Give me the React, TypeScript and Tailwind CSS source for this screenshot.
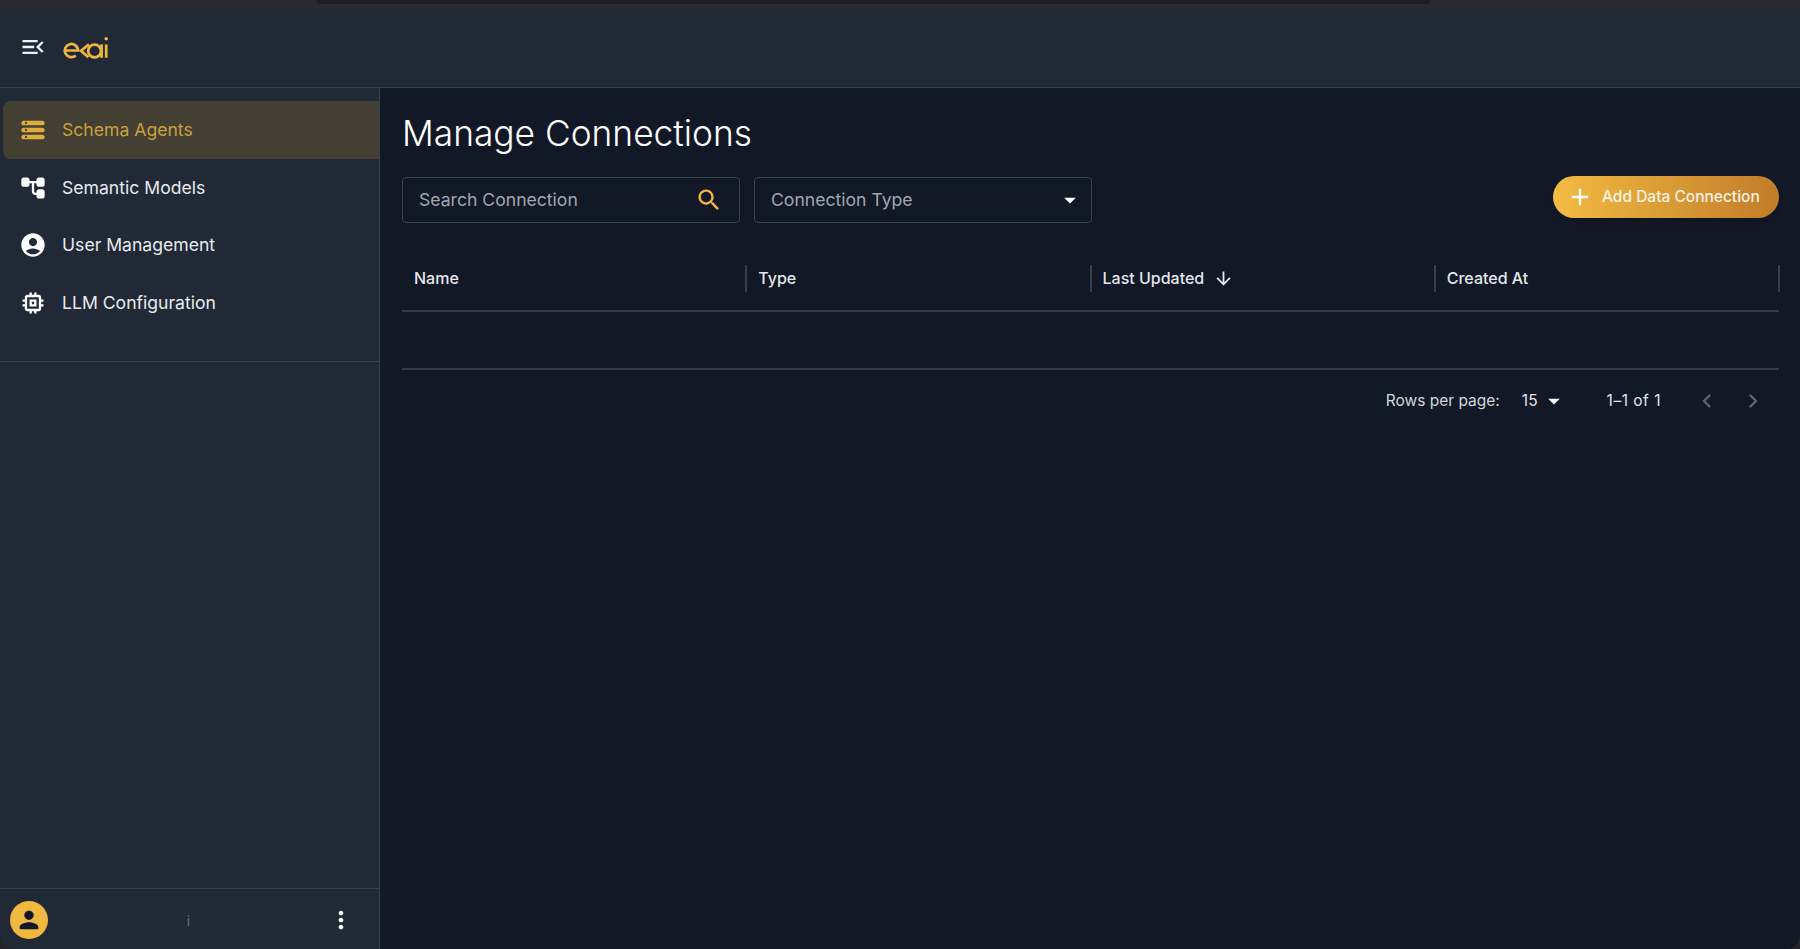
const Icon = ({ d, className }: { d: string; className: string }) => (
  <svg viewBox="0 0 24 24" fill="currentColor" className={className}>
    <path d={d} />
  </svg>
);

const paths = {
  menuOpen: 'M3 18h13v-2H3zm0-5h10v-2H3zm0-7v2h13V6zm18 9.59L17.42 12 21 8.41 19.59 7l-5 5 5 5z',
  storage:
    'M4 20h16c1.1 0 2-.9 2-2s-.9-2-2-2H4c-1.1 0-2 .9-2 2s.9 2 2 2m2-3c.55 0 1 .45 1 1s-.45 1-1 1-1-.45-1-1 .45-1 1-1M2 6c0 1.1.9 2 2 2h16c1.1 0 2-.9 2-2s-.9-2-2-2H4c-1.1 0-2 .9-2 2m5 0c0 .55-.45 1-1 1s-1-.45-1-1 .45-1 1-1 1 .45 1 1m-3 8h16c1.1 0 2-.9 2-2s-.9-2-2-2H4c-1.1 0-2 .9-2 2s.9 2 2 2m2-3c.55 0 1 .45 1 1s-.45 1-1 1-1-.45-1-1 .45-1 1-1',
  tree: 'M17 11h3c1.11 0 2-.9 2-2V5c0-1.11-.9-2-2-2h-3c-1.11 0-2 .9-2 2v1H9.01V5c0-1.11-.9-2-2-2H4c-1.1 0-2 .9-2 2v4c0 1.11.9 2 2 2h3c1.11 0 2-.9 2-2V8h2v7.01c0 1.65 1.34 2.99 2.99 2.99H15v1c0 1.11.9 2 2 2h3c1.11 0 2-.9 2-2v-4c0-1.11-.9-2-2-2h-3c-1.11 0-2 .9-2 2v1h-1.01c-.54 0-.99-.45-.99-.99V8h2v1c0 1.1.9 2 2 2',
  account:
    'M12 2C6.48 2 2 6.48 2 12s4.48 10 10 10 10-4.48 10-10S17.52 2 12 2m0 4c1.93 0 3.5 1.57 3.5 3.5S13.93 13 12 13s-3.5-1.57-3.5-3.5S10.07 6 12 6m0 14c-2.03 0-4.43-.82-6.14-2.88C7.55 15.8 9.68 15 12 15s4.45.8 6.14 2.12C16.43 19.18 14.03 20 12 20',
  memory:
    'M15 9H9v6h6V9zm-2 4h-2v-2h2v2zm8-2V9h-2V7c0-1.1-.9-2-2-2h-2V3h-2v2h-2V3H9v2H7c-1.1 0-2 .9-2 2v2H3v2h2v2H3v2h2v2c0 1.1.9 2 2 2h2v2h2v-2h2v2h2v-2h2c1.1 0 2-.9 2-2v-2h2v-2h-2v-2h2zm-4 6H7V7h10v10z',
  search:
    'M15.5 14h-.79l-.28-.27C15.41 12.59 16 11.11 16 9.5 16 5.91 13.09 3 9.5 3S3 5.91 3 9.5 5.91 16 9.5 16c1.61 0 3.09-.59 4.23-1.57l.27.28v.79l5 4.99L20.49 19l-4.99-5zm-6 0C7.01 14 5 11.99 5 9.5S7.01 5 9.5 5 14 7.01 14 9.5 11.99 14 9.5 14z',
  dropDown: 'M7 10l5 5 5-5z',
  add: 'M19 13h-6v6h-2v-6H5v-2h6V5h2v6h6v2z',
  arrowDown: 'M20 12l-1.41-1.41L13 16.17V4h-2v12.17l-5.58-5.59L4 12l8 8 8-8z',
  chevronLeft: 'M15.41 7.41 14 6l-6 6 6 6 1.41-1.41L10.83 12z',
  chevronRight: 'M10 6 8.59 7.41 13.17 12l-4.58 4.59L10 18l6-6z',
  more: 'M12 8c1.1 0 2-.9 2-2s-.9-2-2-2-2 .9-2 2 .9 2 2 2m0 2c-1.1 0-2 .9-2 2s.9 2 2 2 2-.9 2-2-.9-2-2-2m0 6c-1.1 0-2 .9-2 2s.9 2 2 2 2-.9 2-2-.9-2-2-2',
  person: 'M12 12c2.21 0 4-1.79 4-4s-1.79-4-4-4-4 1.79-4 4 1.79 4 4 4m0 2c-2.67 0-8 1.34-8 4v1c0 .55.45 1 1 1h14c.55 0 1-.45 1-1v-1c0-2.66-5.33-4-8-4',
};

const navItems = [
  { label: 'Schema Agents', icon: paths.storage, active: true },
  { label: 'Semantic Models', icon: paths.tree },
  { label: 'User Management', icon: paths.account },
  { label: 'LLM Configuration', icon: paths.memory },
];

const columns = [
  { label: 'Name' },
  { label: 'Type' },
  { label: 'Last Updated', sorted: true },
  { label: 'Created At' },
];

// ekai wordmark
const Logo = () => (
  <svg viewBox="0 0 46 23" className="h-[23px] w-[46px]" fill="none" stroke="#efb63f" strokeWidth="2.7">
    <path d="M2.6 14.5h12.4a6.6 6.6 0 1 0-2.2 5" />
    <path d="M26 8.4 18 14.8l7.4 6.4" />
    <circle cx="31.6" cy="15" r="6.4" />
    <path d="M38.6 8.4v13.4" />
    <path d="M43.2 8.4v13.4" />
    <circle cx="43.2" cy="2.8" r="1.8" fill="#efb63f" stroke="none" />
  </svg>
);

export default function App() {
  return (
    <div className="h-screen overflow-hidden bg-[#24232a]">
      <div className="flex h-full flex-col overflow-hidden rounded-b-[14px] bg-[#121826] font-['Inter',sans-serif] text-white">
        {/* Browser strip */}
        <div className="h-[9px] shrink-0 bg-[#2b2a30] pl-[316px]">
          <div className="h-[4px] w-[1115px] rounded-b-lg bg-[#1d1d23]" />
        </div>

        {/* Header */}
        <header className="flex h-[79px] shrink-0 items-center gap-[16px] border-b border-[#3a4252] bg-[#222936] pb-[2px] pl-[19px]">
          <Icon d={paths.menuOpen} className="h-7 w-7 text-[#eef0f3]" />
          <Logo />
        </header>

        <div className="flex min-h-0 flex-1">
          {/* Sidebar */}
          <aside className="flex w-[380px] shrink-0 flex-col border-r border-[#3a4252] bg-[#222936]">
            <nav className="flex h-[274px] shrink-0 flex-col border-b border-[#3a4252] pl-[2.5px] pt-[13px]">
              {navItems.map((item) => (
                <div
                  key={item.label}
                  className={`flex h-[57.7px] items-center gap-[15px] rounded-l-lg pl-[16.5px] ${
                    item.active ? 'bg-[#433f33] text-[#c9a23b]' : 'text-[#e8eaee]'
                  }`}
                >
                  <Icon d={item.icon} className={`h-7 w-7 shrink-0 ${item.active ? 'text-[#e0ac3c]' : 'text-white'}`} />
                  <span className="text-[17.6px] leading-none">{item.label}</span>
                </div>
              ))}
            </nav>
            <div className="flex-1" />
            <div className="flex h-[61px] shrink-0 items-center justify-between border-t border-[#3a4252] pl-[10px] pr-[24px] pt-[2px]">
              <div className="flex h-[38px] w-[38px] items-center justify-center rounded-full bg-[#efb840]">
                <Icon d={paths.person} className="h-7 w-7 text-[#121826]" />
              </div>
              <span className="ml-[2px] text-[14px] text-[#6b7280]">i</span>
              <Icon d={paths.more} className="h-7 w-7 text-white" />
            </div>
          </aside>

          {/* Main content */}
          <main className="min-w-0 flex-1 pl-[22px] pr-[21px]">
            <h1 className="mt-[19.5px] text-[35.3px] font-light leading-[52px]">Manage Connections</h1>

            <div className="mt-[17.5px] flex items-start gap-[14px]">
              <div className="flex h-[46px] w-[338px] items-center justify-between rounded border border-[#3d4452] pl-[16px] pr-[16px]">
                <span className="text-[17.6px] text-[#a1a6af]">Search Connection</span>
                <Icon d={paths.search} className="h-7 w-7 text-[#efb840]" />
              </div>
              <div className="flex h-[46px] w-[338px] items-center justify-between rounded border border-[#3d4452] pl-[16px] pr-[7px]">
                <span className="text-[17.6px] text-[#a1a6af]">Connection Type</span>
                <Icon d={paths.dropDown} className="h-7 w-7 text-white" />
              </div>
              <button className="-mt-px ml-auto flex h-[42px] w-[226px] items-center gap-[8px] rounded-full bg-gradient-to-r from-[#f3bb42] to-[#c27c2a] pl-[13px] text-[15.5px] font-medium text-[#fbf3e2] shadow-md">
                <Icon d={paths.add} className="h-7 w-7 shrink-0 text-white" />
                Add Data Connection
              </button>
            </div>

            {/* Table */}
            <div className="mt-[30px] grid h-[59px] grid-cols-4 border-b-2 border-[#363a44]">
              {columns.map((col) => (
                <div key={col.label} className="flex h-[50px] items-center justify-between">
                  <div className="flex items-center gap-[9px] pl-[12px] text-[16px] font-medium text-[#e4e6ea]">
                    {col.label}
                    {col.sorted && <Icon d={paths.arrowDown} className="h-[21px] w-[21px] text-[#eceef1]" />}
                  </div>
                  <div className="-mr-px h-[27px] w-[2px] bg-[#3a3f49]" />
                </div>
              ))}
            </div>
            <div className="h-[58px] border-b-2 border-[#363a44]" />

            {/* Pagination */}
            <div className="flex h-[62px] items-center justify-end pr-[12px] text-[15.5px] text-[#e2e4e8]">
              <span className="text-[#d4d6da]">Rows per page:</span>
              <span className="ml-[22px]">15</span>
              <Icon d={paths.dropDown} className="ml-[2px] h-7 w-7 text-white" />
              <span className="ml-[39px] tracking-[0.5px]">1–1 of 1</span>
              <Icon d={paths.chevronLeft} className="ml-[32px] h-7 w-7 text-[#5d626c]" />
              <Icon d={paths.chevronRight} className="ml-[18px] h-7 w-7 text-[#5d626c]" />
            </div>
          </main>
        </div>
      </div>
    </div>
  );
}
